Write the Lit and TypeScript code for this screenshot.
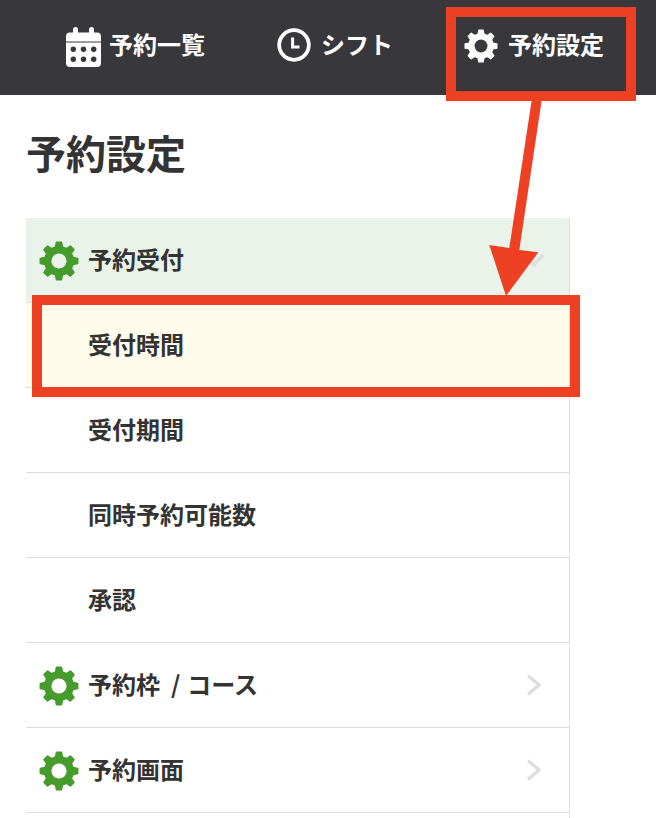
import { LitElement, html, css, svg } from "lit";
import { customElement } from "lit/decorators.js";

function gearPath(): string {
  const teeth = 8, R = 47, r = 36, c = 50;
  const pts: string[] = [];
  const step = (Math.PI * 2) / teeth;
  for (let i = 0; i < teeth; i++) {
    const a = -Math.PI / 2 + i * step;
    const list: [number, number][] = [
      [r, a - step * 0.3],
      [R, a - step * 0.17],
      [R, a + step * 0.17],
      [r, a + step * 0.3],
    ];
    for (const [rad, ang] of list) {
      pts.push(`${(c + rad * Math.cos(ang)).toFixed(2)} ${(c + rad * Math.sin(ang)).toFixed(2)}`);
    }
  }
  return `M${pts.join("L")}Z`;
}
const GEAR = gearPath();

const gear = (cls: string) => html`<svg class=${cls} viewBox="0 0 100 100" aria-hidden="true">
  <path d=${GEAR} fill="currentColor" stroke="currentColor" stroke-width="4" stroke-linejoin="round"></path>
  <circle cx="50" cy="50" r="19" class="hole"></circle>
</svg>`;

const calendar = html`<svg class="cal" viewBox="0 0 35 40" aria-hidden="true">
  <rect x="7" y="0" width="5" height="9" rx="2.5" fill="#fff"></rect>
  <rect x="23" y="0" width="5" height="9" rx="2.5" fill="#fff"></rect>
  <path d="M4 5.5H31A4 4 0 0 1 35 9.5V14.5H0V9.5A4 4 0 0 1 4 5.5Z" fill="#fff"></path>
  <path d="M0 15.5H35V36A4 4 0 0 1 31 40H4A4 4 0 0 1 0 36Z" fill="#fff"></path>
  ${[7.3, 17.5, 27.7].flatMap((x) =>
    [22.3, 32.3].map((y) => svg`<circle cx=${x} cy=${y} r="2.7" fill="#38373c"></circle>`)
  )}
</svg>`;

const clock = html`<svg class="clock" viewBox="0 0 34 34" aria-hidden="true">
  <circle cx="17" cy="17" r="14.8" fill="none" stroke="#fff" stroke-width="3.8"></circle>
  <path d="M15.6 9.5V19H22.5" fill="none" stroke="#fff" stroke-width="3"></path>
</svg>`;

const chevron = (down: boolean) => html`<svg class="chev" viewBox="0 0 20 24" aria-hidden="true">
  ${down
    ? svg`<path d="M1 7L10 17L19 7" fill="none" stroke="#dedede" stroke-width="3.4"></path>`
    : svg`<path d="M4 2.5L15 12L4 21.5" fill="none" stroke="#dedede" stroke-width="3.4"></path>`}
</svg>`;

interface Row {
  label: string;
  icon?: boolean;
  chev?: "down" | "right";
  tone?: "open" | "current";
}

const ROWS: Row[] = [
  { label: "予約受付", icon: true, chev: "down", tone: "open" },
  { label: "受付時間", tone: "current" },
  { label: "受付期間" },
  { label: "同時予約可能数" },
  { label: "承認" },
  { label: "予約枠  / \u200Aコース", icon: true, chev: "right" },
  { label: "予約画面", icon: true, chev: "right" },
  { label: "" },
];

@customElement("app-root")
export class AppRoot extends LitElement {
  static styles = css`
    :host {
      display: block;
      position: relative;
      width: 656px;
      height: 818px;
      overflow: hidden;
      background: #fff;
      color: #333;
      font-family: "Noto Sans CJK JP", "Noto Sans", sans-serif;
      font-weight: 700;
    }
    nav {
      height: 95px;
      background: #38373c;
      color: #fff;
      display: flex;
      align-items: center;
      padding-left: 66px;
      gap: 72px;
      font-size: 24px;
      line-height: 30px;
      box-sizing: border-box;
    }
    .nav-item {
      display: flex;
      align-items: center;
      gap: 10px;
    }
    .nav-item:last-child {
      margin-left: -1px;
      gap: 10px;
    }
    .nav-item span {
      padding-bottom: 7px;
    }
    .cal {
      width: 35px;
      height: 40px;
      margin-top: -1px;
      margin-right: -2px;
      flex: none;
    }
    .clock {
      width: 34px;
      height: 34px;
      flex: none;
      margin-bottom: 5px;
    }
    .gear-w {
      width: 34px;
      height: 34px;
      flex: none;
      color: #fff;
      margin-bottom: 4px;
    }
    .gear-w .hole {
      fill: #38373c;
    }
    .gear-g {
      width: 40px;
      height: 40px;
      flex: none;
      color: #459b2b;
      margin-top: 1px;
    }
    .gear-g .hole {
      fill: #fff;
    }
    .open .gear-g .hole {
      fill: #e9f3e9;
    }
    main {
      padding: 31px 0 0 26px;
    }
    h1 {
      margin: 0 0 39px;
      font-size: 40px;
      line-height: 53px;
      font-weight: 700;
      color: #333;
    }
    .menu {
      width: 544px;
      box-sizing: border-box;
      border-right: 1px solid #ddd;
    }
    .row {
      height: 85px;
      box-sizing: border-box;
      border-bottom: 1px solid #ddd;
      display: flex;
      align-items: center;
      font-size: 24px;
      padding-left: 62px;
      padding-right: 25px;
      color: #333;
    }
    .row.has-icon {
      padding-left: 13px;
      gap: 9px;
    }
    .row.open {
      background: #e9f3e9;
    }
    .row.current {
      background: #fffcec;
    }
    .row .label {
      flex: 1;
      white-space: pre;
      padding-bottom: 3px;
    }
    .chev {
      width: 20px;
      height: 24px;
      flex: none;
    }
    .notes {
      position: absolute;
      left: 0;
      top: 0;
      width: 656px;
      height: 818px;
      pointer-events: none;
    }
  `;

  render() {
    return html`
      <nav>
        <div class="nav-item">${calendar}<span>予約一覧</span></div>
        <div class="nav-item">${clock}<span>シフト</span></div>
        <div class="nav-item">${gear("gear-w")}<span>予約設定</span></div>
      </nav>
      <main>
        <h1>予約設定</h1>
        <div class="menu">
          ${ROWS.map(
            (r) => html`<div class="row ${r.icon ? "has-icon" : ""} ${r.tone ?? ""}">
              ${r.icon ? gear("gear-g") : ""}
              <span class="label">${r.label}</span>
              ${r.chev ? chevron(r.chev === "down") : ""}
            </div>`
          )}
        </div>
      </main>
      <svg class="notes" viewBox="0 0 656 818" aria-hidden="true">
        <rect x="451" y="12" width="180" height="84" fill="none" stroke="#ee4023" stroke-width="10"></rect>
        <rect x="37" y="300" width="538" height="92" fill="none" stroke="#ee4023" stroke-width="10"></rect>
        <path d="M531.7 100L541.7 100L519.3 250L538.3 252.3L506 296L489.3 245L509.3 248Z" fill="#ee4023"></path>
      </svg>
    `;
  }
}
